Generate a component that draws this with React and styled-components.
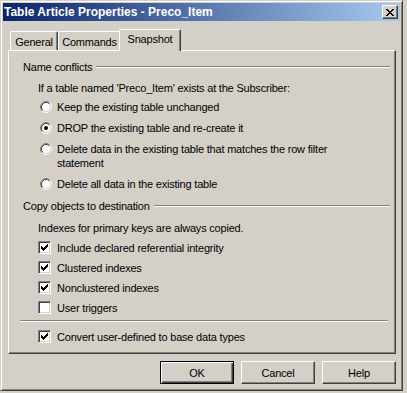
import React from "react";
import styled, { createGlobalStyle } from "styled-components";

const GlobalStyle = createGlobalStyle`
  body {
    margin: 0;
    background: #d4d0c8;
    font-family: "Liberation Sans", Arial, sans-serif;
    font-size: 11px;
    letter-spacing: -0.2px;
    color: #000;
  }
`;

const Window = styled.div`
  box-sizing: border-box;
  width: 403px;
  height: 391px;
  padding: 2px;
  display: flex;
  flex-direction: column;
  background: #d4d0c8;
  border: 1px solid;
  border-color: #d4d0c8 #404040 #404040 #d4d0c8;
  box-shadow: inset 1px 1px #fff, inset -1px -1px #808080;
`;

const TitleBar = styled.div`
  height: 18px;
  display: flex;
  align-items: center;
  justify-content: space-between;
  padding: 0 2px 0 1px;
  background: linear-gradient(to right, #0a246a, #a6caf0);
`;

const Title = styled.span`
  color: #fff;
  font-weight: bold;
  font-size: 12px;
  letter-spacing: 0;
`;

const CloseButton = styled.div`
  box-sizing: border-box;
  width: 16px;
  height: 14px;
  display: flex;
  align-items: center;
  justify-content: center;
  background: #d4d0c8;
  border: 1px solid;
  border-color: #fff #404040 #404040 #fff;
  box-shadow: inset -1px -1px #808080;
`;

const Content = styled.div`
  padding: 8px 4px 0 5px;
  display: flex;
  flex-direction: column;
`;

const TabStrip = styled.div`
  height: 21px;
  display: flex;
  align-items: flex-end;
  padding-left: 2px;
`;

const Tab = styled.div`
  box-sizing: border-box;
  width: ${(p) => (p.$active ? p.$w + 4 : p.$w)}px;
  height: ${(p) => (p.$active ? 22 : 19)}px;
  margin: 0 ${(p) => (p.$active ? -2 : 0)}px ${(p) => (p.$active ? -1 : 0)}px;
  padding-top: ${(p) => (p.$active ? 2 : 3)}px;
  position: relative;
  z-index: ${(p) => (p.$active ? 1 : 0)};
  text-align: center;
  line-height: 14px;
  background: #d4d0c8;
  border-top: 1px solid #fff;
  border-left: 1px solid #fff;
  border-right: 1px solid #404040;
  border-radius: 2px 2px 0 0;
  box-shadow: inset -1px 0 #808080;
`;

const Panel = styled.div`
  box-sizing: border-box;
  height: 304px;
  padding: 0 5px 0 14px;
  display: flex;
  flex-direction: column;
  border: 1px solid;
  border-color: #fff #404040 #404040 #fff;
  box-shadow: inset -1px -1px #808080;
`;

const GroupHeader = styled.div`
  height: 14px;
  margin-top: ${(p) => p.$top}px;
  display: flex;
  align-items: center;
  gap: 4px;
  white-space: nowrap;

  &::after {
    content: "";
    flex: 1;
    border-top: 1px solid #808080;
    border-bottom: 1px solid #fff;
  }
`;

const Intro = styled.div`
  height: 14px;
  line-height: 14px;
  margin-top: ${(p) => p.$top}px;
  padding-left: 15px;
`;

const OptionList = styled.div`
  display: flex;
  flex-direction: column;
  gap: ${(p) => p.$gap}px;
  margin-top: ${(p) => p.$top}px;
`;

const Option = styled.div`
  display: flex;
  align-items: flex-start;
  padding-left: 15px;
  line-height: 14px;
  margin-top: ${(p) => p.$top || 0}px;
`;

const RadioMark = styled.svg`
  flex: none;
  width: 12px;
  height: 12px;
  margin: 1px 5px 0 2px;
`;

const CheckBox = styled.span`
  flex: none;
  box-sizing: border-box;
  width: 13px;
  height: 13px;
  margin: 0 6px 0 0;
  display: flex;
  align-items: center;
  justify-content: center;
  background: #fff;
  border: 1px solid;
  border-color: #808080 #fff #fff #808080;
  box-shadow: inset 1px 1px #404040, inset -1px -1px #d4d0c8;
`;

const Separator = styled.div`
  margin: 5px 2px 0 -3px;
  border-top: 1px solid #808080;
  border-bottom: 1px solid #fff;
`;

const ButtonRow = styled.div`
  display: flex;
  justify-content: flex-end;
  gap: 7px;
  margin-top: 7px;
`;

const Button = styled.div`
  box-sizing: border-box;
  width: 74px;
  height: 23px;
  display: flex;
  align-items: center;
  justify-content: center;
  background: #d4d0c8;
  border: 1px solid;
  border-color: ${(p) => (p.$default ? "#000" : "#fff #404040 #404040 #fff")};
  box-shadow: ${(p) =>
    p.$default
      ? "inset 1px 1px #fff, inset -1px -1px #404040, inset -2px -2px #808080"
      : "inset -1px -1px #808080, inset 1px 1px #d4d0c8"};
`;

const Radio = ({ checked, children }) => (
  <Option>
    <RadioMark viewBox="0 0 12 12">
      <circle cx="6" cy="6" r="4.5" fill="#fff" />
      <path d="M2.11 9.89A5.5 5.5 0 0 1 9.89 2.11" fill="none" stroke="#808080" />
      <path d="M9.89 2.11A5.5 5.5 0 0 1 2.11 9.89" fill="none" stroke="#fff" />
      <path d="M2.82 9.18A4.5 4.5 0 0 1 9.18 2.82" fill="none" stroke="#404040" />
      <path d="M9.18 2.82A4.5 4.5 0 0 1 2.82 9.18" fill="none" stroke="#d4d0c8" />
      {checked && <circle cx="6" cy="6" r="2" fill="#000" />}
    </RadioMark>
    <span>{children}</span>
  </Option>
);

const Check = ({ checked, top, children }) => (
  <Option $top={top}>
    <CheckBox>
      {checked && (
        <svg width="7" height="7" viewBox="0 0 7 7">
          <path
            d="M6 0h1v1h-1zM5 1h2v1h-2zM0 2h1v1h-1zM4 2h3v1h-3zM0 3h2v1h-2zM3 3h3v1h-3zM0 4h5v1h-5zM1 5h3v1h-3zM2 6h1v1h-1z"
            fill="#000"
          />
        </svg>
      )}
    </CheckBox>
    <span>{children}</span>
  </Option>
);

export default function App() {
  return (
    <>
      <GlobalStyle />
      <Window>
        <TitleBar>
          <Title>Table Article Properties - Preco_Item</Title>
          <CloseButton>
            <svg width="8" height="7" viewBox="0 0 8 7">
              <path
                d="M0 0h2v1h-2zM6 0h2v1h-2zM1 1h2v1h-2zM5 1h2v1h-2zM2 2h4v1h-4zM3 3h2v1h-2zM2 4h4v1h-4zM1 5h2v1h-2zM5 5h2v1h-2zM0 6h2v1h-2zM6 6h2v1h-2z"
                fill="#000"
              />
            </svg>
          </CloseButton>
        </TitleBar>
        <Content>
          <TabStrip>
            <Tab $w={48}>General</Tab>
            <Tab $w={63}>Commands</Tab>
            <Tab $w={58} $active>
              Snapshot
            </Tab>
          </TabStrip>
          <Panel>
            <GroupHeader $top={9}>Name conflicts</GroupHeader>
            <Intro $top={7}>If a table named 'Preco_Item' exists at the Subscriber:</Intro>
            <OptionList $gap={7} $top={5}>
              <Radio>Keep the existing table unchanged</Radio>
              <Radio checked>DROP the existing table and re-create it</Radio>
              <Radio>
                Delete data in the existing table that matches the row filter
                <br />
                statement
              </Radio>
              <Radio>Delete all data in the existing table</Radio>
            </OptionList>
            <GroupHeader $top={8}>Copy objects to destination</GroupHeader>
            <Intro $top={8}>Indexes for primary keys are always copied.</Intro>
            <OptionList $gap={6} $top={6}>
              <Check checked>Include declared referential integrity</Check>
              <Check checked>Clustered indexes</Check>
              <Check checked>Nonclustered indexes</Check>
              <Check>User triggers</Check>
            </OptionList>
            <Separator />
            <Check checked top={8}>
              Convert user-defined to base data types
            </Check>
          </Panel>
          <ButtonRow>
            <Button $default>OK</Button>
            <Button>Cancel</Button>
            <Button>Help</Button>
          </ButtonRow>
        </Content>
      </Window>
    </>
  );
}
